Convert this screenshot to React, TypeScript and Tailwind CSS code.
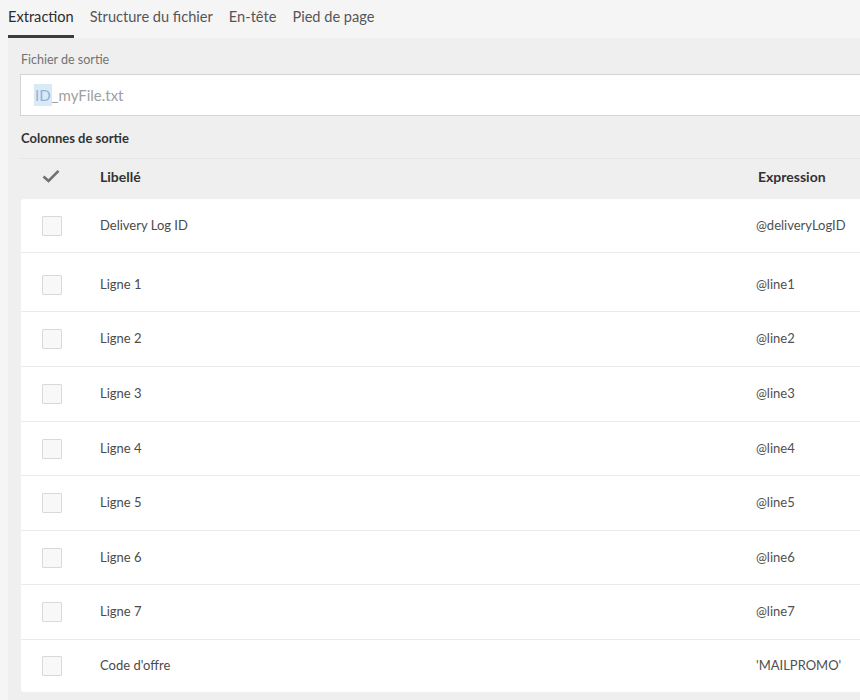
const rows = [
  { label: 'Delivery Log ID', expr: '@deliveryLogID', h: 'h-[54px]' },
  { label: 'Ligne 1', expr: '@line1', h: 'h-[59px] pt-[6px]' },
  { label: 'Ligne 2', expr: '@line2', h: 'h-[55px]' },
  { label: 'Ligne 3', expr: '@line3', h: 'h-[55px]' },
  { label: 'Ligne 4', expr: '@line4', h: 'h-[54px]' },
  { label: 'Ligne 5', expr: '@line5', h: 'h-[55px]' },
  { label: 'Ligne 6', expr: '@line6', h: 'h-[54px]' },
  { label: 'Ligne 7', expr: '@line7', h: 'h-[55px]' },
  { label: "Code d'offre", expr: "'MAILPROMO'", h: 'h-[52px]' },
]

const tabs = ['Extraction', 'Structure du fichier', 'En-tête', 'Pied de page']

const App = () => {
  return (
    <div className="w-[860px] h-[700px] overflow-hidden bg-[#f5f5f5] text-[#4b4b4b]" style={{ fontFamily: 'Lato, "Open Sans", sans-serif' }}>
      {/* tabs */}
      <div className="h-[38px] flex items-end pl-[8px] gap-[16px]">
        {tabs.map((t, i) => (
          <div
            key={t}
            className={
              i === 0
                ? 'h-[38px] flex items-center pb-[2px] border-b-[3px] border-[#3c3c3c] text-[14.6px] text-[#2c2c2c]'
                : 'h-[38px] flex items-center pb-[5px] text-[14.6px] text-[#555]'
            }
          >
            {t}
          </div>
        ))}
      </div>

      <div className="ml-[8px] bg-[#efefef] h-[662px] pl-[12px] pt-[14px]">
        <div className="text-[12.5px] text-[#737373] pl-[1px] leading-[16px]">Fichier de sortie</div>
        <div className="mt-[6px] h-[42px] bg-white border border-[#d4d4d4] border-r-0 flex items-center pl-[13px] text-[15px] text-[#a0a0a0]">
          <span className="bg-[#d9eaf7] text-[#8fb4d6] px-[1px]">ID</span>
          <span>_myFile.txt</span>
        </div>

        <div className="mt-[14px] text-[13px] font-bold text-[#333] pl-[1px] leading-[16px]">Colonnes de sortie</div>

        <div className="mt-[12px] border-t border-[#e6e6e6] h-[41px] pb-[6px] flex items-center text-[14px] font-bold text-[#333]">
          <div className="w-[80px] pl-[22px]">
            <svg width="18" height="14" viewBox="0 0 18 14" fill="none" className="block">
              <path d="M1.5 7.5 L6.5 12 L16.5 1.8" stroke="#707070" strokeWidth="2.6" />
            </svg>
          </div>
          <div className="flex-1">Libellé</div>
          <div className="w-[102px]">Expression</div>
        </div>

        <div className="bg-white ml-[1px] rounded-l-[3px]">
          {rows.map((r, i) => (
            <div
              key={r.label}
              className={`${r.h} flex items-center text-[13px] ${i < rows.length - 1 ? 'border-b border-[#ebebeb]' : ''}`}
            >
              <div className="w-[79px] pl-[21px]">
                <div className="w-[20px] h-[20px] border border-[#d9d9d9] bg-[#f8f8f8] rounded-[1px]" />
              </div>
              <div className="flex-1 text-[#4b4b4b]">{r.label}</div>
              <div className="w-[104px] text-[#505050]">{r.expr}</div>
            </div>
          ))}
        </div>
      </div>
    </div>
  )
}

export default App
